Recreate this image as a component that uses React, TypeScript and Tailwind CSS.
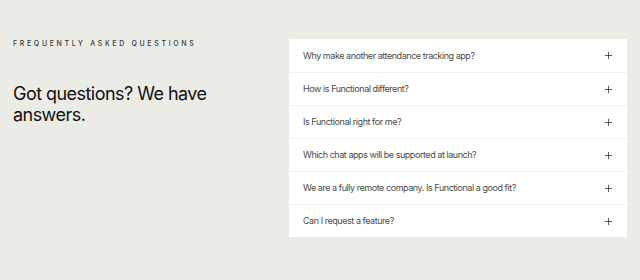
import { Plus } from 'lucide-react';

const QUESTIONS = [
  'Why make another attendance tracking app?',
  'How is Functional different?',
  'Is Functional right for me?',
  'Which chat apps will be supported at launch?',
  'We are a fully remote company. Is Functional a good fit?',
  'Can I request a feature?',
];

export default function App() {
  return (
    <div className="w-[640px] h-[280px] bg-[#ecece7] font-['Inter',sans-serif] flex pt-[39px] pl-[13px]">
      {/* Left intro */}
      <div className="w-[276px] shrink-0">
        <p className="text-[7px] font-medium uppercase tracking-[0.38em] text-[#3a3a38] leading-none mt-[1px]">
          Frequently asked questions
        </p>
        <h2 className="text-[18px] leading-[21px] text-[#111] mt-[36px] tracking-[-0.03em]">
          Got questions? We have
          <br />
          answers.
        </h2>
      </div>

      {/* FAQ list */}
      <div className="w-[338px] bg-white flex flex-col self-start">
        {QUESTIONS.map((q, i) => (
          <div
            key={q}
            className={`h-[33px] flex items-center justify-between pl-[14px] pr-[13px] ${
              i > 0 ? 'border-t border-[#f0f0ec]' : ''
            }`}
          >
            <span className="text-[9px] tracking-[-0.05em] text-[#4a4a48]">{q}</span>
            <Plus size={11} strokeWidth={1.6} className="text-[#222]" />
          </div>
        ))}
      </div>
    </div>
  );
}
